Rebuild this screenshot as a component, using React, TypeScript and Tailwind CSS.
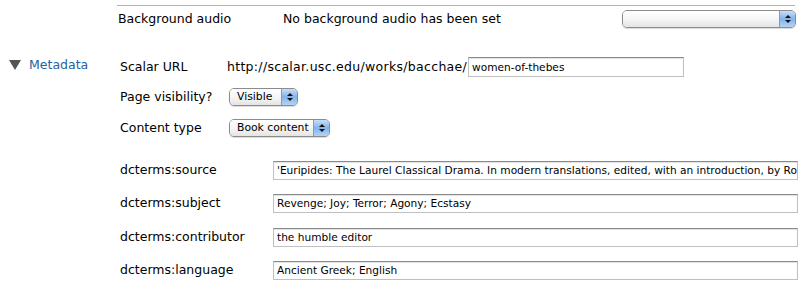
import React from "react";

const font = { fontFamily: '"DejaVu Sans", "Liberation Sans", sans-serif' };

function AquaSelect({ label, width }: { label: string; width: string }) {
  return (
    <div
      className={`relative flex h-[18px] items-stretch overflow-hidden rounded-[5px] border border-[#8c8c8c] shadow-[0_1px_1px_rgba(0,0,0,0.15)] ${width}`}
    >
      <div className="flex min-w-0 flex-1 items-center overflow-hidden whitespace-nowrap bg-gradient-to-b from-white via-[#f6f6f6] to-[#e4e4e4] pl-[7px] text-[10.8px] leading-none text-black">
        {label}
      </div>
      <div className="flex w-[16px] shrink-0 flex-col items-center justify-center gap-[2px] border-l border-[#7d9cc4] bg-gradient-to-b from-[#c8def6] via-[#82b3ea] to-[#b2d4f6]">
        <div className="h-0 w-0 border-x-[3px] border-b-[3px] border-x-transparent border-b-[#111]" />
        <div className="h-0 w-0 border-x-[3px] border-t-[3px] border-x-transparent border-t-[#111]" />
      </div>
    </div>
  );
}

function TextBox({ value, className }: { value: string; className: string }) {
  return (
    <div
      className={`flex items-center overflow-hidden whitespace-nowrap border border-[#c0c0c0] border-t-[#8a8a8a] bg-white pl-[3px] text-[10.6px] leading-none text-black shadow-[inset_0_1px_1px_rgba(0,0,0,0.12)] ${className}`}
    >
      {value}
    </div>
  );
}

function MetaRow({ label, value, mt }: { label: string; value: string; mt: string }) {
  return (
    <div className={`flex h-[20px] items-center ${mt}`}>
      <div className="w-[156px] whitespace-nowrap pl-[3px] text-[12.5px] text-black">{label}</div>
      <TextBox value={value} className="h-[19px] w-[525px]" />
    </div>
  );
}

export default function App() {
  return (
    <div className="h-[288px] w-[805px] overflow-hidden bg-white" style={font}>
      <div className="pt-[5px]">
        <div className="ml-[117px] mr-[10px] border-t border-[#b3b3b3]" />
        <div className="ml-[117px] flex h-[26px] items-center">
          <div className="w-[166px] pl-[1px] text-[12.5px] text-black">Background audio</div>
          <div className="w-[339px] text-[12.5px] text-black">No background audio has been set</div>
          <AquaSelect label="" width="w-[174px]" />
        </div>
      </div>

      <div className="flex">
        <div className="w-[117px] pt-[24px]">
          <div className="flex items-center pl-[9px]">
            <div className="h-0 w-0 border-x-[6px] border-t-[10px] border-x-transparent border-t-[#555]" />
            <span className="ml-[8px] text-[12.5px] text-[#1f64a0]">Metadata</span>
          </div>
        </div>

        <div className="flex-1">
          <div className="mt-[25px] flex h-[20px] items-center">
            <div className="w-[110px] pl-[3px] text-[12.5px] text-black">Scalar URL</div>
            <div className="whitespace-nowrap text-[12.5px] tracking-[0.3px] text-black">
              http://scalar.usc.edu/works/bacchae/
            </div>
            <TextBox value="women-of-thebes" className="ml-[1px] h-[20px] w-[216px]" />
          </div>

          <div className="mt-[10px] flex h-[20px] items-center">
            <div className="w-[112px] pl-[3px] text-[12.5px] text-black">Page visibility?</div>
            <AquaSelect label="Visible" width="w-[69px]" />
          </div>

          <div className="mt-[11px] flex h-[20px] items-center">
            <div className="w-[112px] pl-[3px] text-[12.5px] text-black">Content type</div>
            <AquaSelect label="Book content" width="w-[101px]" />
          </div>

          <MetaRow
            mt="mt-[22px]"
            label="dcterms:source"
            value="'Euripides: The Laurel Classical Drama. In modern translations, edited, with an introduction, by Robert W. Corrigan'"
          />
          <MetaRow mt="mt-[13px]" label="dcterms:subject" value="Revenge; Joy; Terror; Agony; Ecstasy" />
          <MetaRow mt="mt-[14px]" label="dcterms:contributor" value="the humble editor" />
          <MetaRow mt="mt-[13px]" label="dcterms:language" value="Ancient Greek; English" />
        </div>
      </div>
    </div>
  );
}
